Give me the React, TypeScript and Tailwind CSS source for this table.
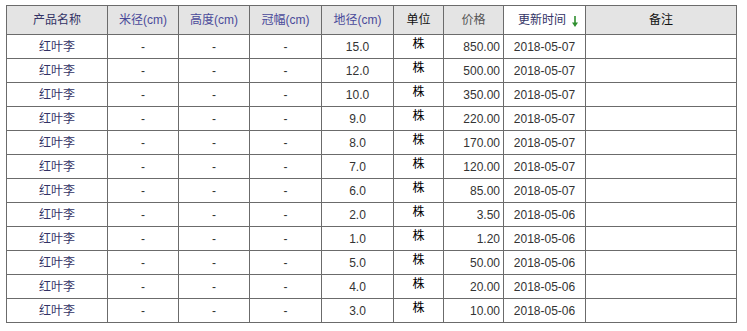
const rows = [
  ["15.0", "850.00", "2018-05-07"],
  ["12.0", "500.00", "2018-05-07"],
  ["10.0", "350.00", "2018-05-07"],
  ["9.0", "220.00", "2018-05-07"],
  ["8.0", "170.00", "2018-05-07"],
  ["7.0", "120.00", "2018-05-07"],
  ["6.0", "85.00", "2018-05-07"],
  ["2.0", "3.50", "2018-05-06"],
  ["1.0", "1.20", "2018-05-06"],
  ["5.0", "50.00", "2018-05-06"],
  ["4.0", "20.00", "2018-05-06"],
  ["3.0", "10.00", "2018-05-06"],
];

function DownArrow() {
  return (
    <svg width="6" height="11" viewBox="0 0 6 11" className="inline-block">
      <path d="M3 0v8" stroke="#2f8f2f" strokeWidth="1.6" />
      <path d="M0 6.5h6L3 11z" fill="#2f8f2f" />
    </svg>
  );
}

const cell = "border border-[#6b6b6b] p-0 h-[24px] leading-none";
const head = "border border-[#6b6b6b] p-0 h-[29px] font-normal leading-none";

export default function App() {
  return (
    <div className="bg-white w-[747px] h-[331px] pl-[6px] pt-[5px] font-['Liberation_Sans','Noto_Sans_CJK_SC',sans-serif] text-[12px]">
      <table className="border-collapse table-fixed w-[730px]">
        <colgroup>
          <col className="w-[101px]" />
          <col className="w-[71px]" />
          <col className="w-[71px]" />
          <col className="w-[72px]" />
          <col className="w-[72px]" />
          <col className="w-[50px]" />
          <col className="w-[60px]" />
          <col className="w-[82px]" />
          <col className="w-[151px]" />
        </colgroup>
        <thead>
          <tr className="bg-[#e4e4e4]">
            <th className={`${head} text-[#333366]`}>产品名称</th>
            <th className={`${head} text-[#4a4a9a]`}>米径(cm)</th>
            <th className={`${head} text-[#4a4a9a]`}>高度(cm)</th>
            <th className={`${head} text-[#4a4a9a]`}>冠幅(cm)</th>
            <th className={`${head} text-[#4a4a9a]`}>地径(cm)</th>
            <th className={`${head} text-[#111]`}>单位</th>
            <th className={`${head} text-[#555]`}>价格</th>
            <th className={`${head} bg-white text-[#333366]`}>
              <span className="relative left-[7px]">更新时间</span>
              <span className="ml-[13px] relative top-[1px]">
                <DownArrow />
              </span>
            </th>
            <th className={`${head} text-[#111]`}>备注</th>
          </tr>
        </thead>
        <tbody>
          {rows.map(([dj, price, date], i) => (
            <tr key={i}>
              <td className={`${cell} text-center text-[#333366]`}>红叶李</td>
              <td className={`${cell} text-center text-[#333]`}>-</td>
              <td className={`${cell} text-center text-[#333]`}>-</td>
              <td className={`${cell} text-center text-[#333]`}>-</td>
              <td className={`${cell} text-center text-[#333]`}>{dj}</td>
              <td className={`${cell} text-center text-[#000]`}>
                <span className="relative -top-[3px]">株</span>
              </td>
              <td className={`${cell} text-right pr-[3px] text-[#333]`}>{price}</td>
              <td className={`${cell} text-center text-[#333]`}>{date}</td>
              <td className={cell}></td>
            </tr>
          ))}
        </tbody>
      </table>
    </div>
  );
}
